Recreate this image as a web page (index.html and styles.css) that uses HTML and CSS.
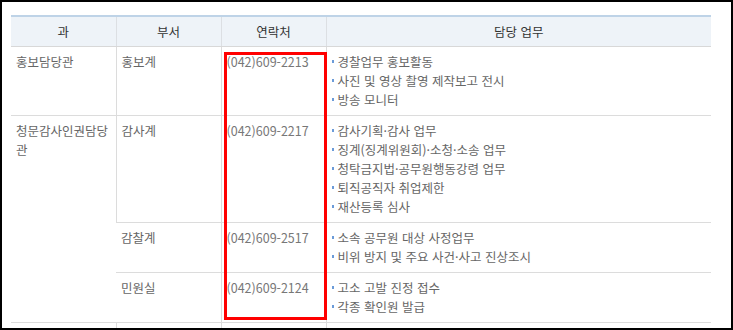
FILE: index.html
```html
<!DOCTYPE html>
<html lang="ko">
<head>
<meta charset="utf-8">
<link rel="stylesheet" href="styles.css">
</head>
<body>
<div class="frame">
  <div class="wrap">
    <table class="org">
      <colgroup>
        <col class="c1"><col class="c2"><col class="c3"><col class="c4">
      </colgroup>
      <thead>
        <tr><th>과</th><th>부서</th><th>연락처</th><th>담당 업무</th></tr>
      </thead>
      <tbody>
        <tr>
          <td>홍보담당관</td>
          <td>홍보계</td>
          <td class="tel">(042)609-2213</td>
          <td><ul><li>경찰업무 홍보활동</li><li>사진 및 영상 촬영 제작보고 전시</li><li>방송 모니터</li></ul></td>
        </tr>
        <tr>
          <td rowspan="3">청문감사인권담당관</td>
          <td>감사계</td>
          <td class="tel">(042)609-2217</td>
          <td><ul><li>감사기획·감사 업무</li><li>징계(징계위원회)·소청·소송 업무</li><li>청탁금지법·공무원행동강령 업무</li><li>퇴직공직자 취업제한</li><li>재산등록 심사</li></ul></td>
        </tr>
        <tr>
          <td>감찰계</td>
          <td class="tel">(042)609-2517</td>
          <td><ul><li>소속 공무원 대상 사정업무</li><li>비위 방지 및 주요 사건·사고 진상조시</li></ul></td>
        </tr>
        <tr>
          <td>민원실</td>
          <td class="tel">(042)609-2124</td>
          <td><ul><li>고소 고발 진정 접수</li><li>각종 확인원 발급</li></ul></td>
        </tr>
        <tr class="next">
          <td>&nbsp;</td><td>&nbsp;</td><td>&nbsp;</td><td>&nbsp;</td>
        </tr>
      </tbody>
    </table>
    <div class="highlight"></div>
  </div>
</div>
</body>
</html>
```

FILE: styles.css
```css
* { box-sizing: border-box; }
html, body { margin: 0; padding: 0; background: #fff; }
.frame {
  width: 733px;
  height: 330px;
  border: 2px solid #000;
  overflow: hidden;
  padding: 13px 0 0 9px;
}
.wrap { position: relative; width: 700px; }
.org {
  width: 700px;
  border-collapse: collapse;
  table-layout: fixed;
  font-family: "Noto Sans CJK KR", "Noto Sans", sans-serif;
  font-size: 12.5px;
  line-height: 19px;
  color: #666;
}
.c1, .c2, .c3 { width: 105px; }
.c4 { width: 385px; }
.org th {
  background: #eef3f8;
  border-top: 2px solid #bed3e7;
  border-bottom: 1px solid #d8d8d8;
  border-left: 1px solid #dcdfe3;
  height: 30px;
  padding: 0;
  font-weight: normal;
  color: #333;
  text-align: center;
  vertical-align: middle;
}
.org th:first-child, .org td:first-child { border-left: none; }
.org td {
  border-left: 1px solid #dcdcdc;
  border-bottom: 1px solid #dcdcdc;
  padding: 5px 5px 6px 5px;
  vertical-align: top;
  text-align: left;
}
.org td.tel { color: #777; }
.org ul { list-style: none; margin: 0; padding: 0; }
.org li { position: relative; padding-left: 6px; }
.org li::before {
  content: "";
  position: absolute;
  left: 0;
  top: 8px;
  width: 2px;
  height: 3px;
  background: #6b9bd8;
}
.highlight {
  position: absolute;
  left: 213px;
  top: 37px;
  width: 103px;
  height: 268px;
  border: 3px solid #ff0000;
}
```
